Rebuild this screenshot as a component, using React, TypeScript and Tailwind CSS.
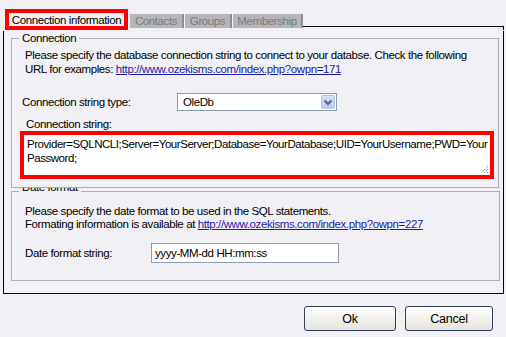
import React from "react";

const font = { fontFamily: '"Liberation Sans", Arial, sans-serif' };

function Grip() {
  return (
    <svg width="9" height="9" viewBox="0 0 9 9" className="absolute right-[1px] bottom-[1px]">
      <line x1="8" y1="1" x2="1" y2="8" stroke="#8a8a8a" strokeWidth="1" strokeDasharray="1 1" />
      <line x1="8" y1="4" x2="4" y2="8" stroke="#8a8a8a" strokeWidth="1" strokeDasharray="1 1" />
      <line x1="8" y1="7" x2="7" y2="8" stroke="#8a8a8a" strokeWidth="1" />
    </svg>
  );
}

function Chevron() {
  return (
    <svg width="12" height="12" viewBox="0 0 12 12">
      <path d="M2.5 4.5 L6 8 L9.5 4.5" fill="none" stroke="#4d6185" strokeWidth="2" />
    </svg>
  );
}

export default function App() {
  return (
    <div
      className="w-[506px] h-[337px] bg-[#f1f0f5] overflow-hidden text-[11.5px] tracking-[-0.4px] leading-[14px] text-black"
      style={font}
    >
      {/* Tab strip */}
      <div className="flex h-[30px] pl-[5px] pr-[2px]">
        <div className="mt-[9px] h-[21px] w-[123px] border-[4px] border-[#ff0000] flex items-center justify-center pt-[1px]">
          <span className="whitespace-nowrap">Connection information</span>
        </div>
        <div className="ml-[2px] mt-[14px] h-[14px] w-[54px] bg-[#b6b6b9] border-r-2 border-[#8e8e92] flex items-center justify-center text-[#7a7a7c]">
          Contacts
        </div>
        <div className="ml-[1px] mt-[14px] h-[14px] w-[47px] bg-[#b6b6b9] border-r-2 border-[#8e8e92] flex items-center justify-center text-[#7a7a7c]">
          Groups
        </div>
        <div className="ml-[1px] mt-[14px] h-[14px] w-[70px] bg-[#b6b6b9] border-r-2 border-[#8e8e92] flex items-center justify-center text-[#7a7a7c]">
          Membership
        </div>
        <div className="flex-1 mt-[26px] h-[4px] border-t border-r border-black" />
      </div>

      {/* Tab panel */}
      <div className="ml-[3px] w-[501px] h-[263px] border-l border-r border-b border-black">
        <fieldset className="mt-[1px] ml-[7px] w-[488px] h-[157px] border border-[#adadb5]">
          <legend className="ml-[7px] px-[3px] leading-[14px]">Connection</legend>
          <div className="pl-[13px] pt-[3px] whitespace-nowrap">
            Please specify the database connection string to connect to your databse. Check the following
            <br />
            URL for examples:{" "}
            <span className="text-[#1c1ca8] underline">http://www.ozekisms.com/index.php?owpn=171</span>
          </div>
          <div className="mt-[17px] pl-[10px] flex items-center">
            <div className="w-[155px]">Connection string type:</div>
            <div className="w-[160px] h-[18px] bg-white border border-[#8c9cb0] flex items-center">
              <div className="flex-1 pl-[5px]">OleDb</div>
              <div className="w-[14px] h-[14px] mr-[1px] rounded-[2px] border border-[#b4c3e6] bg-gradient-to-b from-[#dbe4fa] to-[#b7c7ee] flex items-center justify-center">
                <Chevron />
              </div>
            </div>
          </div>
          <div className="mt-[6px] pl-[14px]">Connection string:</div>
          <div className="ml-[8px] w-[474px] h-[48px] border-[4px] border-[#ff0000] bg-white relative">
            <div className="pl-[3px] pt-[2px] whitespace-nowrap tracking-[-0.45px]">
              Provider=SQLNCLI;Server=YourServer;Database=YourDatabase;UID=YourUsername;PWD=Your
              <br />
              Password;
            </div>
            <Grip />
          </div>
        </fieldset>

        <fieldset className="ml-[7px] w-[489px] h-[93px] border border-[#adadb5]">
          <legend className="ml-[7px] px-[3px] h-[6px] overflow-hidden leading-[14px]">
            <span className="block mt-[-8px]">Date format</span>
          </legend>
          <div className="pl-[13px] pt-[11px] leading-[13px] whitespace-nowrap">
            Please specify the date format to be used in the SQL statements.
            <br />
            Formating information is available at{" "}
            <span className="text-[#1c1ca8] underline">http://www.ozekisms.com/index.php?owpn=227</span>
          </div>
          <div className="mt-[12px] pl-[13px] flex items-center">
            <div className="w-[126px]">Date format string:</div>
            <div className="w-[188px] h-[20px] bg-white border border-[#8c9cb0] flex items-center pl-[3px]">
              yyyy-MM-dd HH:mm:ss
            </div>
          </div>
        </fieldset>
      </div>

      {/* Buttons */}
      <div className="mt-[12px] pr-[13px] flex justify-end gap-[9px]">
        <button className="w-[92px] h-[25px] rounded-[3px] border border-[#2f3d55] bg-gradient-to-b from-white to-[#e4e3dc] text-[12.5px] tracking-[-0.2px]">
          Ok
        </button>
        <button className="w-[88px] h-[25px] rounded-[3px] border border-[#2f3d55] bg-gradient-to-b from-white to-[#e4e3dc] text-[12.5px] tracking-[-0.2px]">
          Cancel
        </button>
      </div>
    </div>
  );
}
